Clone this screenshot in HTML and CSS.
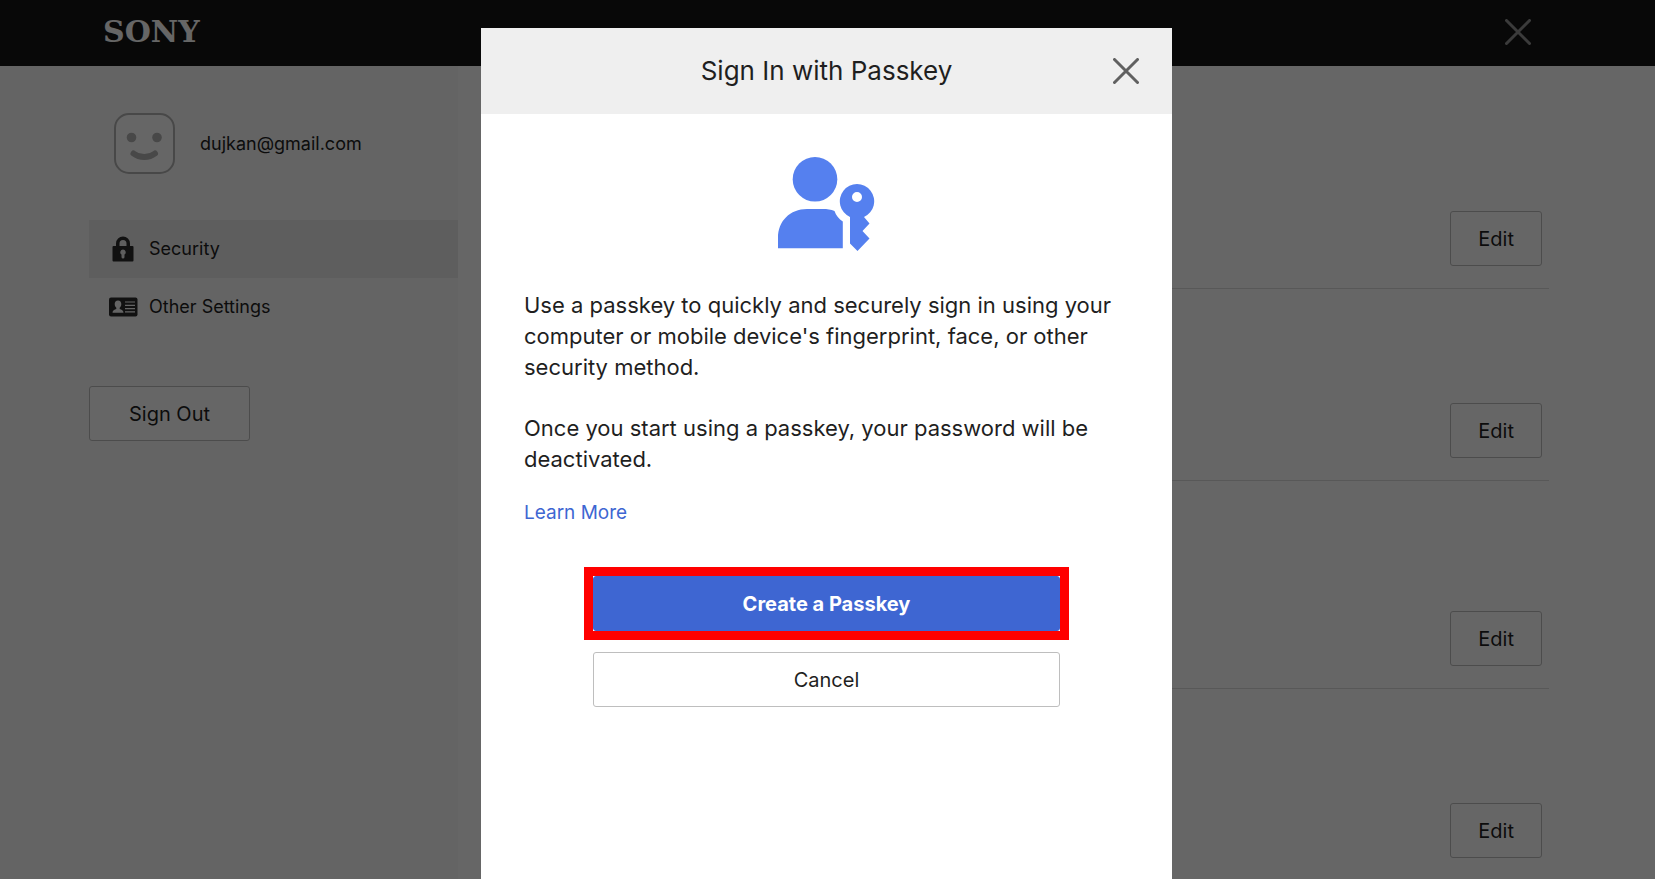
FILE: index.html
```html
<!DOCTYPE html>
<html lang="en">
<head>
    <meta charset="UTF-8">
    <meta name="viewport" content="width=device-width, initial-scale=1.0">
    <title>Sony - Account Management</title>
    <link rel="stylesheet" href="styles.css">
</head>
<body>

    <!-- Top bar -->
    <header class="topbar">
        <a class="logo" href="#">SONY</a>
        <button class="icon-button topbar-close" aria-label="Close">
            <svg width="26" height="26" viewBox="0 0 26 26"><path d="M1.5 1.5l23 23M24.5 1.5l-23 23"/></svg>
        </button>
    </header>

    <div class="page">
        <!-- Side menu -->
        <aside class="sidebar">
            <div class="account">
                <svg class="avatar" width="61" height="61" viewBox="0 0 61 61">
                    <rect x="1" y="1" width="59" height="59" rx="14"/>
                    <circle cx="17.500" cy="24.500" r="4.800"/>
                    <circle cx="43" cy="24.500" r="4.800"/>
                    <path d="M19.500 40.500c6 4.800 15.500 4.800 21.500 0"/>
                </svg>
                <span>dujkan@gmail.com</span>
            </div>
            <nav class="menu">
                <a class="menu-item active" href="#">
                    <svg width="30" height="26" viewBox="0 0 30 26">
                        <path fill="#2c2c2c" fill-rule="evenodd" d="M8 10V7.500a7 7 0 0 1 14 0V10h2.500a1 1 0 0 1 1 1v13.500a1 1 0 0 1-1 1h-19a1 1 0 0 1-1-1V11a1 1 0 0 1 1-1zm3.500 0h7V7.500a3.500 3.500 0 0 0-7 0zM15 13.500a2.800 2.800 0 0 0-1.500 5.100V21a1.500 1.500 0 0 0 3 0v-2.400a2.800 2.800 0 0 0-1.500-5.100z"/>
                    </svg>
                    Security
                </a>
                <a class="menu-item" href="#">
                    <svg width="30" height="20" viewBox="0 0 30 20">
                        <rect x="1" y="0.500" width="28.500" height="19" rx="2" fill="#2c2c2c"/>
                        <path fill="#fafafa" d="M10 3.500c2.200 0 3.300 1.500 3.300 3.600 0 1.700-.7 3-1.600 3.700v1.200c1.800.8 3.800 1.300 3.800 3.800h-11c0-2.500 2-3 3.800-3.800v-1.200c-.9-.7-1.600-2-1.600-3.700 0-2.100 1.100-3.600 3.300-3.600z"/>
                        <path stroke="#fafafa" stroke-width="1.200" d="M17 5h10M17 8.300h10M17 11.600h10M17 14.900h10"/>
                    </svg>
                    Other Settings
                </a>
            </nav>
            <button class="button sign-out">Sign Out</button>
        </aside>

        <!-- Settings list -->
        <main class="settings">
            <div class="setting"><button class="button">Edit</button></div>
            <div class="setting"><button class="button">Edit</button></div>
            <div class="setting setting-tall"><button class="button">Edit</button></div>
            <div class="setting"><button class="button">Edit</button></div>
        </main>
    </div>

    <!-- Passkey dialog -->
    <div class="overlay">
        <div class="modal" role="dialog" aria-modal="true" aria-labelledby="modal-title">
            <div class="modal-header">
                <h1 id="modal-title">Sign In with Passkey</h1>
                <button class="icon-button modal-close" aria-label="Close">
                    <svg width="26" height="26" viewBox="0 0 26 26"><path d="M1.500 1.500l23 23M24.500 1.500l-23 23"/></svg>
                </button>
            </div>
            <div class="modal-body">
                <svg class="passkey-icon" width="97" height="94" viewBox="0 0 97 94">
                    <circle cx="37" cy="22.300" r="22.300"/>
                    <path d="M0 91.300V81C0 64 12 52 29 52h16c4 0 8 .6 11.500 2 1.500 4.500 4.500 8 8.300 10.500v26.800z"/>
                    <path fill-rule="evenodd" d="M86 60l5.500 6.500L84.500 74l7 7.500L79.500 94 72 86.500V60a17.200 17.200 0 1 1 14 0zM79 35a5 5 0 1 0 0 10 5 5 0 0 0 0-10z"/>
                </svg>
                <p>Use a passkey to quickly and securely sign in using your computer or mobile device's fingerprint, face, or other security method.</p>
                <p>Once you start using a passkey, your password will be deactivated.</p>
                <a class="learn-more" href="#">Learn More</a>
                <div class="actions">
                    <div class="highlight">
                        <button class="button primary">Create a Passkey</button>
                    </div>
                    <button class="button">Cancel</button>
                </div>
            </div>
        </div>
    </div>

</body>
</html>
```

FILE: styles.css
```css
* {
    box-sizing: border-box;
}
body {
    margin: 0;
    height: 100vh;
    display: flex;
    flex-direction: column;
    overflow: hidden;
    font-family: Inter, "Liberation Sans", sans-serif;
    font-size: 18px;
    line-height: 24px;
    color: #1f1f1f;
    background: #fff;
}
a {
    color: inherit;
    text-decoration: none;
}
svg {
    display: block;
    flex: none;
}

/* Buttons */
.button {
    height: 55px;
    padding: 0 27px;
    font: inherit;
    font-size: 20px;
    color: inherit;
    background: #fff;
    border: 1px solid #bebebe;
    border-radius: 3px;
    cursor: pointer;
}
.icon-button {
    padding: 0;
    border: none;
    background: none;
    cursor: pointer;
}
.icon-button path {
    fill: none;
    stroke: currentColor;
    stroke-width: 3;
    stroke-linecap: round;
}

/* Top bar */
.topbar {
    flex: none;
    display: flex;
    align-items: center;
    justify-content: space-between;
    height: 66px;
    padding: 0 124px 3px 103px;
    background: #141414;
}
.logo {
    font-family: "DejaVu Serif", serif;
    font-size: 30px;
    font-weight: bold;
    color: #fff;
}
.topbar-close {
    color: #959595;
}

/* Page columns */
.page {
    flex: 1;
    min-height: 0;
    display: flex;
}
.sidebar {
    flex: none;
    width: 458px;
    padding: 47px 0 0 89px;
    background: #fafafa;
}
.account {
    display: flex;
    align-items: center;
    gap: 25px;
    margin-bottom: 46px;
    padding-left: 25px;
}
.avatar {
    fill: #b4b4b4;
}
.avatar rect {
    fill: #fff;
    stroke: #b4b4b4;
    stroke-width: 2;
}
.avatar path {
    fill: none;
    stroke: #b4b4b4;
    stroke-width: 6;
    stroke-linecap: round;
}
.menu-item {
    display: flex;
    align-items: center;
    gap: 11px;
    height: 58px;
    padding-left: 19px;
}
.menu-item.active {
    background: #ebebeb;
}
.sign-out {
    width: 161px;
    margin-top: 50px;
}

/* Settings list */
.settings {
    flex: 1;
    margin-left: 30px;
    padding: 31px 106px 0 0;
}
.setting {
    display: flex;
    align-items: flex-end;
    justify-content: flex-end;
    height: 192px;
    padding: 0 7px 22px 0;
    border-bottom: 1px solid #dcdcdc;
}
.setting-tall {
    height: 208px;
}

/* Dialog */
.overlay {
    position: fixed;
    inset: 0;
    display: flex;
    justify-content: center;
    padding: 28px 2px 0 0;
    background: rgba(0, 0, 0, 0.6);
}
.modal {
    width: 100%;
    max-width: 691px;
    background: #fff;
}
.modal-header {
    position: relative;
    display: flex;
    align-items: center;
    justify-content: center;
    height: 86px;
    background: #efefef;
}
.modal-header h1 {
    margin: 0;
    font-size: 26px;
    font-weight: normal;
    line-height: 32px;
}
.modal-close {
    position: absolute;
    top: 30px;
    right: 33px;
    color: #606060;
}
.modal-body {
    padding: 43px;
}
.passkey-icon {
    margin: 0 auto 39px;
    fill: #5580ef;
}
.modal-body p {
    margin: 0 0 30px;
    font-size: 22px;
    line-height: 31px;
}
.modal-body .learn-more {
    display: block;
    margin-top: -4px;
    font-size: 19px;
    color: #3e66d2;
}
.actions {
    display: flex;
    flex-direction: column;
    gap: 12px;
    max-width: 467px;
    margin: 42px auto 0;
}
.highlight {
    margin: 0 -9px;
    border: 9px solid #f00;
    background: #fff;
}
.primary {
    display: block;
    width: 100%;
    font-weight: bold;
    color: #fff;
    background: #3e66d2;
    border-color: #3e66d2;
}
```
